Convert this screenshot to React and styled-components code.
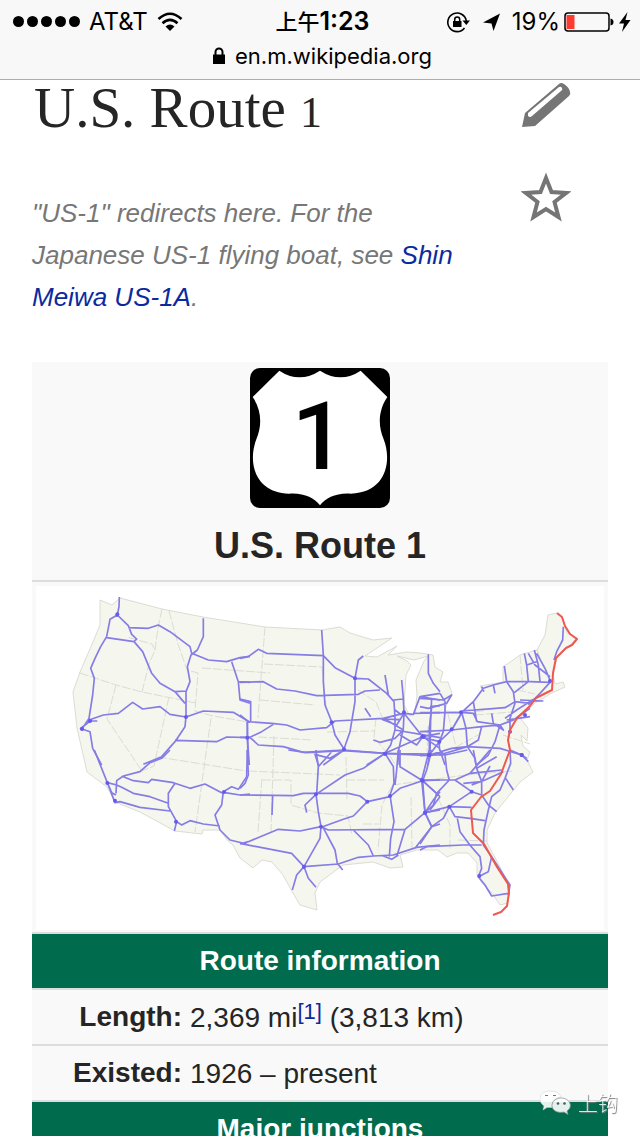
import React from 'react';
import styled, {createGlobalStyle} from 'styled-components';

const GlobalStyle = createGlobalStyle`
    * {
        box-sizing: border-box;
    }
    body {
        margin: 0;
        background: #fff;
        color: #252525;
        font-family: "Liberation Sans", Arial, sans-serif;
    }
`
const Screen = styled.div`
    display: flex;
    flex-direction: column;
    height: 100vh;
`
const Header = styled.header`
    flex: none;
    padding: 4px 8px 0px 13px;
    height: 80px;
    background: #f8f8f8;
    border-bottom: 1px solid #adadad;
    color: #000;
    font-family: Inter, "Noto Sans CJK SC", sans-serif;
    font-size: 24px;
    line-height: 34px;
`
const StatusRow = styled.div`
    display: grid;
    grid-template-columns: 1fr auto 1fr;
    align-items: center;
`
const StatusGroup = styled.div`
    display: flex;
    align-items: center;
    justify-content: ${props => props.$end ? 'flex-end' : 'flex-start'};
    gap: ${props => props.$end ? 4 : 9}px;
`
const Signal = styled.div`
    display: flex;
    gap: 3px;
`
const Dot = styled.span`
    width: 11px;
    height: 11px;
    border-radius: 50%;
    background: #000;
`
const Time = styled.time`
    font-size: 25px;
    font-weight: 600;
    > span {
        font-size: 22px;
        font-weight: 500;
    }
`
const Address = styled.div`
    display: flex;
    align-items: center;
    justify-content: center;
    gap: 10px;
    font-size: 22px;
`
const Icon = styled.svg`
    display: block;
    flex: none;
`
const Article = styled.main`
    flex: 1;
    min-height: 0;
    padding: 0px 32px;
    overflow-y: auto;
    scrollbar-width: none;
`
const Intro = styled.div`
    display: grid;
    grid-template-columns: 1fr 50px;
    column-gap: 56px;
    padding: 0px 37px 0px 0px;
`
const Title = styled.h1`
    margin: 0px;
    padding-left: 2px;
    font-family: "Liberation Serif", Georgia, serif;
    font-size: 57px;
    font-weight: 400;
    line-height: 56px;
    > span {
        font-size: 44px;
        line-height: 1;
    }
`
const Hatnote = styled.p`
    margin: 56px 0px 44px 0px;
    color: #777;
    font-size: 26px;
    font-style: italic;
    line-height: 42px;
`
const Link = styled.a`
    color: #0b2a9f;
    text-decoration: none;
`
const Actions = styled.div`
    display: flex;
    flex-direction: column;
    gap: 44px;
    padding-top: 2px;
`
const ActionButton = styled.button`
    display: block;
    padding: 0px;
    border: none;
    background: none;
    color: #757575;
`
const Infobox = styled.table`
    width: 100%;
    table-layout: fixed;
    border-collapse: collapse;
    background: #f9f9f9;
    font-size: 28px;
    line-height: 38px;
`
const LabelCol = styled.col`
    width: 154px;
`
const Row = styled.tr`
    border-bottom: 2px solid #ddd;
`
const SignCell = styled.th`
    padding: 6px 4px 10px 4px;
    font-size: 36px;
    line-height: 48px;
    > svg {
        margin: 0px auto 14px auto;
    }
`
const MapCell = styled.td`
    padding: 4px 4px 2px 4px;
`
const MapSvg = styled.svg`
    display: block;
    width: 100%;
    background: #fff;
`
const Section = styled.th`
    padding: 8px 4px;
    background: #006b4d;
    color: #fff;
`
const Label = styled.th`
    padding: 8px 4px;
    text-align: right;
    vertical-align: top;
`
const Value = styled.td`
    padding: 9px 4px 7px 4px;
    vertical-align: top;
`
const Ref = styled.sup`
    font-size: 22px;
    line-height: 1;
    vertical-align: 8px;
`
const Watermark = styled.div`
    position: fixed;
    right: 22px;
    bottom: 18px;
    display: flex;
    align-items: center;
    gap: 7px;
    color: rgba(255, 255, 255, 0.85);
    font-family: "Noto Sans CJK SC", sans-serif;
    font-size: 20px;
    font-weight: 300;
    line-height: 30px;
    text-shadow: 1px 1px 1px #777;
`

// country outline, in map units of 1/3 scale
const land = 'M100 600L112 605L120 598L162 609L203 617L265 627L322 630L340 627L350 633L373 640L392 638L377 648L365 656L377 657L397 646L388 655L407 652L420 653L433 655L435 667L443 672L440 682L448 682L452 693L447 702L445 711L462 712L473 702L483 690L480 686L503 682L503 667L520 655L537 650L545 635L548 615L557 613L562 617L567 633L577 638L567 648L557 658L553 675L555 684L563 682L565 687L552 693L535 703L520 718L528 728L527 741L521 735L523 746L530 752L527 760L533 772L520 782L512 792L495 813L487 830L487 843L498 863L508 883L508 903L500 905L492 893L482 883L477 875L477 863L468 853L457 853L447 857L438 850L417 850L400 855L403 867L390 868L373 862L343 865L320 882L315 893L317 910L300 905L293 893L283 875L272 862L262 860L253 868L240 858L233 845L227 840L220 830L203 830L202 834L175 831L140 812L115 802L107 787L87 772L82 750L77 728L73 692L80 672L93 642L100 625Z'
const lake = 'M397 656L407 661L411 665L406 675L404 705L410 716L415 713L417 695L416 680L424 661L428 656L414 660Z'
const borders = 'M80 673L116 685L142 692L196 703M116 685L107 719L142 771M169 697L154 766L142 771M142 692L149 664L155 650L152 644L127 637M162 609L158 628L155 650M169 611L178 644L187 670L198 673L195 711L213 716L248 722M202 668L270 673M265 627L258 718M264 664L322 667M260 700L315 705M211 718L195 832M158 757L246 771M274 736L271 832M258 737L313 740M248 771L340 775M262 780L291 780L291 805L318 813L348 816L352 835M258 832L262 777M346 780L384 780M346 757L347 800M358 690L376 702L384 722M322 667L326 706M327 732L374 731M376 718L374 738L390 756L396 766M397 776L382 805L378 850M411 797L412 848M363 824L379 824M428 726L427 755M392 785L481 773M448 714L456 747L478 735M438 798L450 825L450 850M473 702L475 712L512 706M475 715L512 712M517 690L535 694M520 655L523 690M537 650L547 676M503 735L530 744M465 775L512 771M458 840L487 841'

// each sheet is a piece of the map with its own origin
const sheets = [
    {
        x: 72, y: -3,
        roads: [
            'M178 36L177 65L172 90L150 103L140 155L122 185L105 220L92 250L103 280L98 330L87 400L66 432L90 440L98 490L125 540',
            'M172 90L205 122L215 148L230 162L222 170L140 158M205 128L265 130L295 120L330 140L390 185L395 205',
            'M222 170L248 200L275 265L300 295L345 320L378 318M345 320L375 355',
            'M430 100L430 155L412 195L393 210L382 245L390 290L378 320L378 395L375 425L345 470L305 515L250 538',
            'M395 205L445 225L500 230L540 218L570 214M515 230L535 290L540 345L570 355M535 290L570 292',
            'M87 405L130 390L175 385L218 352L248 372L300 365L330 388L378 396L430 378L520 382L570 412M345 466L470 470L500 456L570 458',
            'M562 410L562 460L568 540M60 432L90 408L112 408',
        ],
        hubs: [[66, 432], [172, 88], [378, 396], [90, 408], [562, 458]],
    },
    {
        x: 612, y: -3,
        roads: [
            'M0 220L25 215L55 193L80 205L250 212L285 248L345 280L385 282L440 325L462 350L465 400L465 435',
            'M245 135L250 210L250 290L255 360L275 410L285 450L312 492M370 213L355 225L345 280L345 350L330 440L312 492',
            'M0 292L70 290L110 312L165 318L230 332L355 328L375 318L420 315',
            'M0 342L32 350L32 410M0 390L25 410L95 415L140 420L180 435L260 428L285 408L430 400L490 385',
            'M0 457L30 457L65 440L100 418M30 457L55 480L130 485L190 502L312 495L435 505L570 512L600 505',
            'M22 410L24 540M312 495L250 540M312 495L270 520L225 508L235 540M435 505L380 540M435 270L445 330L462 350M375 370L392 395',
            'M485 285L490 340L492 385L548 455L600 490M492 385L490 430L475 500L478 540M460 345L490 342M400 465L420 472L465 460L490 435L435 402M465 435L452 480L435 505M435 505L548 455L600 445M425 403L470 420L492 385',
            'M492 385L520 388L540 335L600 345M565 208L565 265L580 295L600 320M520 385L600 383M540 335L600 325M575 340L572 400L570 510M465 435L600 458M548 455L530 480L480 450M465 375L485 390M570 365L600 362M430 402L480 404',
        ],
        hubs: [[345, 280], [312, 493], [492, 382], [435, 506], [548, 455], [568, 510], [275, 412]],
    },
    {
        x: 1152, y: -3,
        roads: [
            'M60 325L75 350L75 380L70 440L58 470L28 510M0 340L70 345L95 330L80 355L25 370L0 365M0 383L125 382L160 350L190 310L220 300L260 290L330 290L390 292',
            'M125 382L95 435L58 470L58 490L75 540M125 382L160 385L172 410L240 420L280 405L330 370M0 440L95 435L185 425L240 420M125 378L255 368L285 350L330 355',
            'M253 243L260 290L280 320L285 355L270 400L270 440M313 205L320 240L325 290L280 325M325 205L345 240L390 275M343 195L355 240L360 290M320 240L350 230M350 205L375 250L392 290L360 325L325 360',
            'M430 125L428 165L410 200L402 225M125 382L138 430L142 485L165 520L168 540M185 425L175 465L142 485L58 510M142 485L240 490L305 510L325 530M240 420L225 470L205 510L170 540M220 300L225 325M185 305L192 320',
            'M0 455L58 470M28 510L24 540M35 365L28 430L28 510M160 350L170 410M0 512L28 510L95 490L142 485M260 405L330 395M255 400L290 375L345 340M300 345L370 348M215 385L220 415L250 435L240 420M95 435L125 385',
        ],
        hubs: [[123, 382], [58, 470], [28, 510], [10, 455], [390, 288], [315, 390], [270, 440], [305, 510], [95, 433]],
    },
    {
        x: 72, y: 492,
        roads: [
            'M103 0L142 98L165 158L180 155L240 172L330 183M142 98L170 105L185 112L220 130L270 140L325 160',
            'M168 130L170 92L190 78L240 65L270 38L305 25L330 0M190 80L220 92L265 98L275 88L340 98L390 115L435 102L485 128L515 110L535 118L560 80L562 0',
            'M345 100L325 130L325 170L350 215L343 243M350 215L365 225L390 212L430 222L480 228M490 125L485 165L465 195L480 240L510 270L560 282M495 128L540 135L570 132M142 98L155 128L168 135',
        ],
        hubs: [[142, 99], [165, 152], [492, 126], [348, 215]],
    },
    {
        x: 612, y: 492,
        roads: [
            'M22 0L25 75L15 100L0 115M0 135L160 137L190 130L325 130L360 138L382 155L340 198L310 208L248 230',
            'M435 10L370 55L315 75L228 133L235 185L243 230L240 265L192 350M228 0L235 50L230 133M280 0L235 50M145 0L200 8L310 2L435 10L570 12',
            'M0 282L25 275L115 238L180 243L243 230L265 240L495 238L555 188L600 180M0 280L50 290L155 310L192 350L295 342L355 322L400 318L460 315L530 292L600 285',
            'M98 137L96 195M228 133L195 165L200 188M248 230L285 300L292 340L308 360M192 350L170 375L157 420M192 350L205 385L228 412M340 240L385 285L400 318',
            'M435 10L460 50L462 100L450 135L462 215L452 265L448 320M382 155L450 140L480 115L548 92L600 140M480 0L480 50L548 92L555 188L575 230L525 295',
            'M475 0L470 60L465 105M495 238L470 320M575 0L560 60L548 92M548 92L600 90M600 125L580 150L555 188M575 230L600 222M430 318L455 328L475 315M600 140L570 180',
        ],
        hubs: [[228, 133], [243, 230], [192, 350], [450, 138], [548, 92], [555, 188], [382, 155], [435, 11]],
    },
    {
        x: 1152, y: 492,
        roads: [
            'M28 0L5 90L50 130M58 0L75 15L80 60L88 90L50 130L40 165L15 188L35 230L0 282M88 170L15 188L5 90L105 90L150 70L210 0M0 15L75 15L142 0',
            'M160 0L170 55L185 95L185 135L205 165L230 185M88 170L105 200L150 205L195 212M88 170L155 172M88 170L70 205L35 230M105 90L155 125L185 135M155 125L88 170M155 105L195 90L250 65M210 48L185 95M130 100L185 95',
            'M0 300L20 290L130 285L185 285M112 205L120 245L152 288L180 320L185 355L175 380L195 405L215 438L265 430M215 320L205 365L175 380M270 0L272 40L255 85L240 120L215 140L205 180L192 240L190 285L215 320L270 405L265 435M255 82L280 120M270 0L305 15L320 25M170 55L230 20M150 70L245 60',
        ],
        hubs: [[88, 170], [5, 90], [15, 188], [178, 378], [28, 15], [155, 125], [305, 15]],
    },
]
const routeOne = 'M557 613L562 617L565 626L570 634L577 639L572 645L566 648L556 658L553 673L552 690L536 698L530 706L517 718L510 730L508 740L510 750L501 774L490 791L481 797L471 810L473 833L484 844L497 867L508 884L509 893L507 906L501 912L493 915'

function RouteMap() {
    return <MapSvg viewBox="0 0 1704 1032" role="img" aria-label="Route map">
        <g transform="scale(3) translate(-36 -586)" fill="none" strokeLinejoin="round">
            <path d={land} fill="#f5f6ee" stroke="#dcdcd4" strokeWidth="1"/>
            <path d={borders} stroke="#dcdcd4" strokeWidth="1" strokeDasharray="9 2"/>
            <path d={lake} fill="#fff" stroke="#dcdcd5" strokeWidth="1"/>
        </g>
        {sheets.map(sheet => (
            <path
                key={`${sheet.x}-${sheet.y}`}
                d={sheet.roads.join('')}
                transform={`translate(${sheet.x} ${sheet.y})`}
                fill="none"
                stroke="#857ce6"
                strokeWidth="5"
                strokeLinejoin="round"
            />
        ))}
        {sheets.map(sheet => sheet.hubs.map(([cx, cy]) => (
            <circle key={`${sheet.x + cx}-${sheet.y + cy}`} cx={sheet.x + cx} cy={sheet.y + cy} r="6" fill="#6659ec"/>
        )))}
        <path d={routeOne} transform="scale(3) translate(-36 -586)" fill="none" stroke="#f0584f" strokeWidth="2" strokeLinejoin="round"/>
    </MapSvg>
}

function RouteSign() {
    return <Icon width="140" height="140" viewBox="0 0 420 420" role="img" aria-label="U.S. Route 1 marker">
        <rect width="420" height="420" rx="30"/>
        <path fill="#fff" d="M88 8Q148 48 210 8Q272 48 332 8L412 87C384 128 384 175 401 214C426 278 410 374 302 377C258 374 228 390 210 412C192 390 162 374 118 377C10 374 -6 278 19 214C36 175 36 128 8 87Z"/>
        <text x="206" y="303" textAnchor="middle" fontFamily="Roboto, sans-serif" fontSize="284" fontWeight="500">1</text>
    </Icon>
}

function StatusBar() {
    return <StatusRow>
        <StatusGroup>
            <Signal>
                {[1, 2, 3, 4, 5].map(bar => <Dot key={bar}/>)}
            </Signal>
            <span>AT&amp;T</span>
            <Icon width="26" height="20" viewBox="0 0 26 20">
                <path d="M1.5 7Q13 -3.500 24.500 7M5.500 11.200Q13 4.500 20.500 11.200" fill="none" stroke="#000" strokeWidth="2.600"/>
                <path d="M8.500 14.500Q13 10.500 17.500 14.500L13 19Z"/>
            </Icon>
        </StatusGroup>
        <Time><span>上午</span>1:23</Time>
        <StatusGroup $end>
            <Icon width="62" height="24" viewBox="0 0 62 24">
                <path d="M18.500 18A9.300 9.300 0 1 1 20.300 11" fill="none" stroke="#000" strokeWidth="1.600"/>
                <path d="M16.500 10.500H24L20.300 15Z"/>
                <path d="M7 11H15.500V17H7Z"/>
                <path d="M8.700 11V9.500A2.500 2.500 0 0 1 13.700 9.500V11" fill="none" stroke="#000" strokeWidth="1.500"/>
                <path d="M54 3.500L47.500 21L45.500 13.500L37 12.500Z"/>
            </Icon>
            <span>19%</span>
            <Icon width="68" height="22" viewBox="0 0 68 22">
                <rect x="1" y="2" width="44" height="18" rx="3" fill="none" stroke="#000" strokeWidth="1.500"/>
                <rect x="2.500" y="4" width="8" height="14" fill="#ff3b30"/>
                <path d="M46.500 7.500Q49.500 8 49.500 11T46.500 14.500Z"/>
                <path d="M63.500 1L55 12.500H60L58 21L66.500 9H61.500Z"/>
            </Icon>
        </StatusGroup>
    </StatusRow>
}

export default function App() {
    return <Screen>
        <GlobalStyle/>
        <Header>
            <StatusBar/>
            <Address>
                <Icon width="12" height="18" viewBox="0 0 12 18">
                    <path d="M0 7.500H12V17H0Z"/>
                    <path d="M2.500 8V5A3.500 3.500 0 0 1 9.500 5V8" fill="none" stroke="#000" strokeWidth="2"/>
                </Icon>
                <span>en.m.wikipedia.org</span>
            </Address>
        </Header>
        <Article>
            <Intro>
                <div>
                    <Title>U.S. Route <span>1</span></Title>
                    <Hatnote>
                        "US-1" redirects here. For the Japanese US-1 flying boat, see <Link href="#shin-meiwa">Shin Meiwa US-1A</Link>.
                    </Hatnote>
                </div>
                <Actions>
                    <ActionButton aria-label="Edit">
                        <Icon width="50" height="46" viewBox="0 0 50 46">
                            <path fill="currentColor" d="M1 45L4 31L38 2Q40 0 43 2Q48 5 49 10Q50 12 48 14L14 44Z"/>
                            <path fill="#fff" d="M7 31L38 5Q40 4 41 6Q42 8 40 9L11 34Q9 36 7 34Z"/>
                        </Icon>
                    </ActionButton>
                    <ActionButton aria-label="Watch">
                        <Icon width="50" height="50" viewBox="0 0 50 50">
                            <path fill="none" stroke="currentColor" strokeWidth="4" d="M25 6L30.500 20L45 21L33.500 30L37.500 45L25 37L12.500 45L16.500 30L5 21L19.500 20Z"/>
                        </Icon>
                    </ActionButton>
                </Actions>
            </Intro>
            <Infobox>
                <colgroup>
                    <LabelCol/>
                    <col/>
                </colgroup>
                <tbody>
                    <Row>
                        <SignCell colSpan="2">
                            <RouteSign/>
                            U.S. Route 1
                        </SignCell>
                    </Row>
                    <Row>
                        <MapCell colSpan="2"><RouteMap/></MapCell>
                    </Row>
                    <Row>
                        <Section colSpan="2">Route information</Section>
                    </Row>
                    <Row>
                        <Label scope="row">Length:</Label>
                        <Value>2,369 mi<Ref><Link href="#cite-1">[1]</Link></Ref> (3,813 km)</Value>
                    </Row>
                    <Row>
                        <Label scope="row">Existed:</Label>
                        <Value>1926 – present</Value>
                    </Row>
                    <Row>
                        <Section colSpan="2">Major junctions</Section>
                    </Row>
                </tbody>
            </Infobox>
        </Article>
        <Watermark>
            <Icon width="31" height="26" viewBox="0 0 31 26">
                <path fill="#fff" fillOpacity="0.9" stroke="#ccc" strokeWidth="0.500" d="M10 1C4 1 0 4.500 0 9Q0 13 4 16L3 20L7 17.500L12 17.500Q11 8 21 7Q19 1 10 1Z"/>
                <path fill="#fff" fillOpacity="0.9" stroke="#8a9a94" strokeWidth="0.800" d="M21 8C16 8 12 11.500 12 15.500C12 20 17 23.500 24 22L28 24.500L27 21C34 16 29 8 21 8Z"/>
                <path fill="#777" d="M5 5H8V6H5ZM13 5H16V6H13Z"/>
                <circle cx="18" cy="13.500" r="1.300" fill="#456"/>
                <circle cx="24.500" cy="13.500" r="1.300" fill="#456"/>
            </Icon>
            上钩
        </Watermark>
    </Screen>
}
